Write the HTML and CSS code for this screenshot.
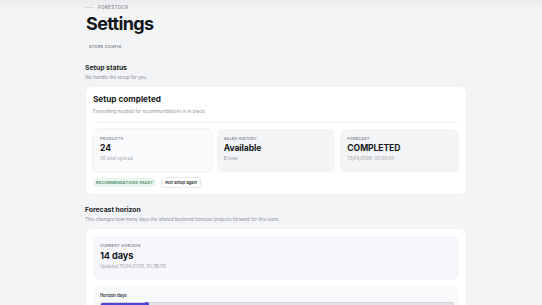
FILE: index.html
```html
<!DOCTYPE html>
<html lang="en">
<head>
    <meta charset="UTF-8">
    <meta name="viewport" content="width=device-width, initial-scale=1.0">
    <title>Settings - Forestock</title>
    <link rel="stylesheet" href="styles.css">
</head>
<body>
    <div class="topbar"></div>

    <main class="page">
        <div class="eyebrow"><span class="eyebrow-line"></span>FORESTOCK</div>
        <h1>Settings</h1>
        <div class="tag">STORE CONFIG</div>

        <section class="section">
            <h2>Setup status</h2>
            <p class="section-desc">We handle the setup for you.</p>

            <div class="card">
                <h3>Setup completed</h3>
                <p class="card-desc">Everything needed for recommendations is in place.</p>
                <div class="divider"></div>

                <div class="stats">
                    <div class="stat stat-light">
                        <div class="stat-label">PRODUCTS</div>
                        <div class="stat-value">24</div>
                        <div class="stat-sub">26 total synced</div>
                    </div>
                    <div class="stat">
                        <div class="stat-label">SALES HISTORY</div>
                        <div class="stat-value">Available</div>
                        <div class="stat-sub">8 rows</div>
                    </div>
                    <div class="stat">
                        <div class="stat-label">FORECAST</div>
                        <div class="stat-value">COMPLETED</div>
                        <div class="stat-sub">13/04/2026, 02:00:00</div>
                    </div>
                </div>

                <div class="actions">
                    <span class="badge-ready">RECOMMENDATIONS READY</span>
                    <button class="btn-ghost">Run setup again</button>
                </div>
            </div>
        </section>

        <section class="section section-second">
            <h2>Forecast horizon</h2>
            <p class="section-desc">This changes how many days the shared backend forecast projects forward for this store.</p>

            <div class="card">
                <div class="horizon-box">
                    <div class="stat-label">CURRENT HORIZON</div>
                    <div class="horizon-value">14 days</div>
                    <div class="stat-sub">Updated 17/04/2026, 20:38:59</div>
                </div>
                <div class="slider-box">
                    <div class="slider-label">Horizon days</div>
                    <div class="slider-track">
                        <div class="slider-fill" style="width: 13%"></div>
                    </div>
                </div>
            </div>
        </section>
    </main>
</body>
</html>
```

FILE: styles.css
```css
body {
    font-family: 'Inter', 'Noto Sans', sans-serif;
    background-color: #f3f4f6;
    margin: 0;
    padding: 0;
    color: #16181d;
}

.topbar {
    position: absolute;
    top: 0;
    left: 0;
    right: 0;
    height: 10px;
    background: linear-gradient(to bottom, #ececee, #f3f4f6);
}

.page {
    position: relative;
    width: 381px;
    margin-left: 85px;
    padding-top: 4px;
}

.eyebrow {
    display: flex;
    align-items: center;
    gap: 4px;
    font-size: 4.5px;
    letter-spacing: 0.08em;
    color: #8a8f98;
    font-weight: 600;
    height: 7px;
}

.eyebrow-line {
    width: 9px;
    height: 1px;
    background-color: #d5d8dd;
}

h1 {
    font-size: 18px;
    font-weight: 700;
    letter-spacing: -0.035em;
    margin: 1px 0 6px 1px;
    line-height: 24px;
    color: #121419;
}

.tag {
    width: fit-content;
    font-size: 4px;
    font-weight: 600;
    letter-spacing: 0.06em;
    color: #7d828b;
    padding: 2px 3px;
    margin-left: 1px;
    line-height: 5px;
    background-color: #f5f6f8;
    border-radius: 6px;
}

.section {
    margin-top: 12px;
}

.section-second {
    margin-top: 11px;
}

h2 {
    font-size: 6.8px;
    font-weight: 700;
    margin: 0;
    line-height: 10px;
    color: #1c1f25;
}

.section-desc {
    font-size: 4.6px;
    color: #8d919a;
    margin: 1px 0 6px 0;
    line-height: 7px;
}

.card {
    background-color: #fff;
    border-radius: 6px;
    padding: 7px 7px 6px 7px;
    margin-left: 1px;
    box-shadow: 0 1px 2px rgba(0, 0, 0, 0.03);
}

.card h3 {
    font-size: 8.2px;
    font-weight: 700;
    margin: 0;
    line-height: 11px;
    color: #1a1d22;
}

.card-desc {
    font-size: 4.6px;
    color: #8d919a;
    margin: 3px 0 7px 0;
    line-height: 7px;
}

.divider {
    height: 1px;
    background-color: #eef0f2;
}

.stats {
    display: grid;
    grid-template-columns: repeat(3, 1fr);
    gap: 5px;
    margin-top: 6px;
}

.stat {
    background-color: #f2f4f5;
    border-radius: 6px;
    padding: 7px 7px 6px 7px;
    height: 30px;
}

.stat-light {
    background-color: #f9fafb;
    box-shadow: 0 0 0 1px #f2f3f5;
}

.stat-label {
    font-size: 3.8px;
    font-weight: 600;
    letter-spacing: 0.07em;
    color: #858a93;
    line-height: 5px;
}

.stat-value {
    font-size: 8.6px;
    font-weight: 700;
    letter-spacing: -0.01em;
    color: #15181d;
    line-height: 12px;
    margin-top: 1px;
}

.stat-sub {
    font-size: 4.5px;
    color: #9a9ea6;
    line-height: 7px;
    margin-top: 1px;
}

.actions {
    display: flex;
    align-items: center;
    gap: 5px;
    margin-top: 5px;
}

.badge-ready {
    font-size: 3.7px;
    font-weight: 600;
    letter-spacing: 0.07em;
    color: #3e8a63;
    background-color: #eaf5ee;
    padding: 2px 3px;
    border-radius: 6px;
}

.btn-ghost {
    font-family: inherit;
    font-size: 4.1px;
    font-weight: 600;
    color: #1c1f25;
    background-color: #fff;
    border: 1px solid #e8e9ec;
    border-radius: 3px;
    padding: 2px 3px;
    line-height: 5px;
}

.horizon-box {
    background-color: #f6f6fc;
    border-radius: 6px;
    padding: 7px 7px 6px 7px;
    height: 31px;
}

.horizon-value {
    font-size: 9.2px;
    font-weight: 700;
    letter-spacing: -0.01em;
    color: #15181d;
    line-height: 12px;
    margin-top: 2px;
}

.slider-box {
    background-color: #f8f9fa;
    border-radius: 6px;
    padding: 7px 5px 6px 7px;
    margin-top: 6px;
}

.slider-label {
    font-size: 4.2px;
    font-weight: 600;
    color: #2a2d33;
    line-height: 6px;
}

.slider-track {
    margin-top: 3px;
    height: 3px;
    background-color: #e2e4e8;
    border: 0.5px solid #cfd2d7;
    border-radius: 2px;
}

.slider-fill {
    position: relative;
    height: 100%;
    background-color: #4c45d6;
    border-radius: 2px;
}

/* pino do slider */
.slider-fill::after {
    content: '';
    position: absolute;
    right: -2px;
    top: -1.5px;
    width: 5px;
    height: 5px;
    border-radius: 50%;
    background-color: #4c45d6;
}
```
